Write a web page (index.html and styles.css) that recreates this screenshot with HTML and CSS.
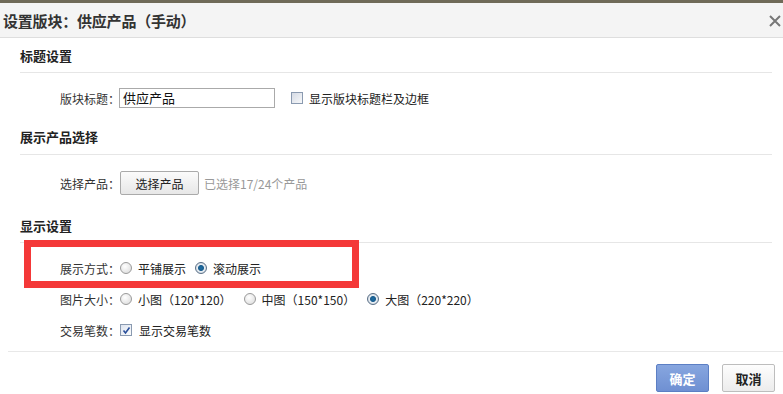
FILE: index.html
```html
<!DOCTYPE html>
<html lang="zh">
<head>
<meta charset="utf-8">
<link rel="stylesheet" href="styles.css">
</head>
<body>
<div class="topstrip"></div>
<div class="dialog">
  <div class="header">
    <span class="title">设置版块：供应产品（手动）</span>
    <span class="close"><svg width="12" height="12" viewBox="0 0 12 12"><path d="M1 1L11 11M11 1L1 11" stroke="#777" stroke-width="2"/></svg></span>
  </div>

  <div class="sec-title s1">标题设置</div>
  <div class="row r1">
    <span class="label">版块标题：</span>
    <span class="input">供应产品</span>
    <span class="check"></span>
    <span class="text">显示版块标题栏及边框</span>
  </div>

  <div class="sec-title s2">展示产品选择</div>
  <div class="row r2">
    <span class="label">选择产品：</span>
    <span class="btn">选择产品</span>
    <span class="hint">已选择17/24个产品</span>
  </div>

  <div class="sec-title s3">显示设置</div>
  <div class="rows">
    <div class="row">
      <span class="label">展示方式：</span>
      <span class="radio"></span><span class="text">平铺展示</span>
      <span class="radio on next"></span><span class="text">滚动展示</span>
    </div>
    <div class="row">
      <span class="label">图片大小：</span>
      <span class="radio"></span><span class="text">小图（120*120）</span>
      <span class="radio next2"></span><span class="text">中图（150*150）</span>
      <span class="radio on next2"></span><span class="text">大图（220*220）</span>
    </div>
    <div class="row">
      <span class="label">交易笔数：</span>
      <span class="check on"><svg width="9" height="9" viewBox="0 0 9 9"><path d="M1.5 4.5L3.5 7L7.5 1.5" stroke="#2a4f9a" stroke-width="1.6" fill="none"/></svg></span>
      <span class="text">显示交易笔数</span>
    </div>
  </div>

  <div class="footer">
    <span class="fbtn ok">确定</span>
    <span class="fbtn cancel">取消</span>
  </div>

  <div class="highlight"></div>
</div>
</body>
</html>
```

FILE: styles.css
```css
html, body {
  margin: 0;
  padding: 0;
  background: #fff;
}
body {
  font-family: "Noto Sans CJK SC", "Noto Sans", sans-serif;
  font-size: 12px;
  color: #333;
  width: 783px;
  height: 394px;
  overflow: hidden;
}
.topstrip {
  height: 3px;
  background: #6f6a58;
}
.dialog {
  position: relative;
}
.header {
  height: 34px;
  background: #f4f4f4;
  border-bottom: 1px solid #dedede;
  display: flex;
  align-items: center;
  justify-content: space-between;
  padding: 0 2px 0 3px;
}
.title {
  font-size: 15px;
  font-weight: bold;
  color: #333;
  letter-spacing: -0.2px;
}
.close {
  display: flex;
  width: 12px;
  height: 12px;
  margin-top: 1px;
}
.sec-title {
  margin-left: 20px;
  margin-right: 11px;
  height: 20px;
  line-height: 20px;
  font-size: 13px;
  font-weight: bold;
  color: #222;
  border-bottom: 1px solid #e6e6e6;
}
.s1 { margin-top: 8px; padding-bottom: 6px; }
.s2 { margin-top: 16px; padding-bottom: 7px; }
.s3 { margin-top: 20px; padding-bottom: 6px; }
.row {
  display: flex;
  align-items: center;
  height: 26px;
  padding-left: 60px;
}
.r1 { margin-top: 12px; }
.r2 { margin-top: 15px; }
.label {
  width: 60px;
  white-space: nowrap;
}
.input {
  box-sizing: border-box;
  width: 156px;
  height: 20px;
  border: 1px solid #aaa;
  margin-left: -1px;
  padding-left: 3px;
  font-size: 13px;
  line-height: 18px;
  color: #111;
}
.check {
  box-sizing: border-box;
  width: 12px;
  height: 12px;
  border: 1px solid #8a9ab0;
  background: linear-gradient(135deg, #d5dae4, #f7f8fa);
  margin-left: 16px;
  margin-right: 6px;
  display: flex;
  align-items: center;
  justify-content: center;
}
.check.on {
  margin-left: 0;
  margin-right: 7px;
  background: linear-gradient(135deg, #dde3ee, #fbfcfd);
}
.text {
  white-space: nowrap;
  color: #222;
}
.btn {
  box-sizing: border-box;
  width: 79px;
  height: 24px;
  border: 1px solid #aaa;
  border-radius: 2px;
  background: linear-gradient(#fbfbfb, #e7e7e7);
  display: flex;
  align-items: center;
  justify-content: center;
  color: #222;
}
.hint {
  margin-left: 5px;
  color: #999;
}
.rows {
  margin-top: 12px;
  display: flex;
  flex-direction: column;
  gap: 5px;
}
.radio {
  box-sizing: border-box;
  width: 12px;
  height: 12px;
  border-radius: 50%;
  border: 1px solid #9a9a9a;
  background: radial-gradient(circle at 40% 35%, #fff, #d8d8d8);
  margin-right: 6px;
  position: relative;
}
.radio.on {
  border-color: #5a6f86;
  background: radial-gradient(circle at 50% 50%, #1d6fa5 0, #1a5d8e 2.5px, #e8eef3 3.5px, #c9d2dc 6px);
}
.radio.next { margin-left: 9px; }
.radio.next2 { margin-left: 12px; }
.footer {
  margin-top: 8px;
  margin-left: 8px;
  border-top: 1px solid #e8e8e8;
  padding-top: 12px;
  display: flex;
  justify-content: flex-end;
  gap: 13px;
  padding-right: 8px;
}
.fbtn {
  box-sizing: border-box;
  width: 53px;
  height: 28px;
  border-radius: 2px;
  display: flex;
  align-items: center;
  justify-content: center;
  font-size: 13px;
  font-weight: bold;
}
.ok {
  border: 1px solid #5c7fc4;
  background: linear-gradient(#87a6df, #6f90d2);
  color: #fff;
}
.cancel {
  border: 1px solid #bdbdbd;
  background: linear-gradient(#fdfdfd, #ececec);
  color: #222;
}
.highlight {
  position: absolute;
  left: 24px;
  top: 237px;
  width: 321px;
  height: 34px;
  border: 7px solid #f43838;
  pointer-events: none;
}
```
